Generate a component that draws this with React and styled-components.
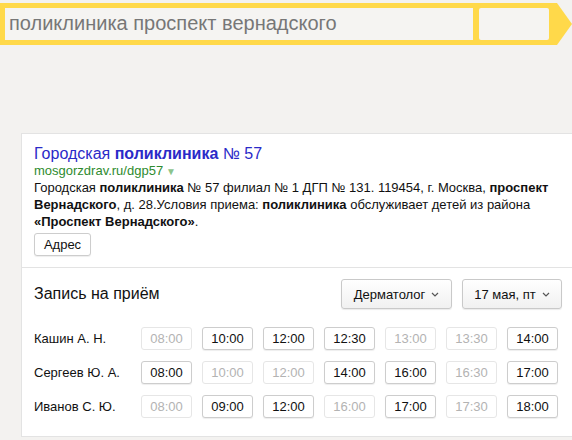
import styled, { createGlobalStyle } from 'styled-components'

const GlobalStyle = createGlobalStyle`
  html, body {
    margin: 0;
    padding: 0;
    background: #f3f2f0;
    overflow: hidden;
  }
  body {
    font-family: "Liberation Sans", Arial, sans-serif;
    color: #000;
  }
`

const Page = styled.div`
  width: 572px;
  height: 440px;
  overflow: hidden;
  padding-top: 3px;
  box-sizing: border-box;
`

const SearchBar = styled.div`
  display: flex;
  align-items: stretch;
  height: 42px;
`

const SearchFrame = styled.div`
  display: flex;
  flex: 1;
  gap: 6px;
  padding: 5px 8px 5px 5px;
  background: #ffd94a;
`

const SearchInput = styled.div`
  flex: 1;
  display: flex;
  align-items: center;
  padding: 0 0 2px 4px;
  background: #f5f4f2;
  color: #777;
  font-size: 20px;
`

const SearchButton = styled.div`
  width: 70px;
  background: #f5f4f2;
  border-radius: 2px;
`

const Arrow = styled.div`
  width: 15px;
  background: #ffd94a;
  clip-path: polygon(0 0, 100% 50%, 0 100%);
`

const Card = styled.div`
  margin: 88px 0 0 21px;
  width: 580px;
  background: #fff;
  border: 1px solid #e3e3e3;
  box-sizing: border-box;
`

const Snippet = styled.div`
  padding: 10px 12px 11px;
`

const Title = styled.a`
  display: block;
  font-size: 16px;
  line-height: 20px;
  color: #2a2ac8;
  text-decoration: none;
  b { font-weight: bold; }
`

const Url = styled.div`
  font-size: 13px;
  line-height: 14px;
  color: #2e8b2e;
  span {
    color: #8cc48c;
    font-size: 10px;
    margin-left: 3px;
  }
`

const Text = styled.p`
  margin: 0;
  font-size: 13px;
  line-height: 17px;
  color: #111;
  b { font-weight: bold; }
`

const Button = styled.button`
  font-family: inherit;
  font-size: 13px;
  color: ${p => (p.$off ? '#b3b3b3' : '#111')};
  background: #fff;
  border: 1px solid ${p => (p.$off ? '#e6e6e6' : '#cdcdcd')};
  border-radius: 3px;
  box-shadow: ${p => (p.$off ? 'none' : '0 1px 1px rgba(0,0,0,0.07)')};
  padding: 0;
  cursor: pointer;
`

const AddressButton = styled(Button)`
  margin-top: 3px;
  width: 57px;
  height: 23px;
`

const Schedule = styled.div`
  border-top: 1px solid #e3e3e3;
  padding: 11px 12px 18px;
`

const Header = styled.div`
  display: flex;
  align-items: center;
  width: 528px;
  height: 30px;
`

const HeaderTitle = styled.div`
  flex: 1;
  font-size: 16px;
  color: #111;
`

const Select = styled.button`
  display: flex;
  align-items: center;
  justify-content: center;
  gap: 6px;
  height: 30px;
  width: ${p => p.$w}px;
  margin-left: 10px;
  font-family: inherit;
  font-size: 13px;
  color: #111;
  background: linear-gradient(#fff, #f1f1f1);
  border: 1px solid #c9c9c9;
  border-radius: 3px;
  box-shadow: 0 1px 1px rgba(0,0,0,0.08);
  padding: 0;
`

const Rows = styled.div`
  display: flex;
  flex-direction: column;
  gap: 11px;
  margin-top: 18px;
`

const Row = styled.div`
  display: grid;
  grid-template-columns: 97px repeat(7, 51px);
  column-gap: 10px;
  align-items: center;
`

const Name = styled.div`
  font-size: 13px;
  color: #111;
`

const Slot = styled(Button)`
  height: 23px;
`

const Chevron = () => (
  <svg width="8" height="5" viewBox="0 0 8 5">
    <path d="M1 1l3 3 3-3" fill="none" stroke="#555" strokeWidth="1.2" />
  </svg>
)

const doctors = [
  {
    name: 'Кашин А. Н.',
    slots: [['08:00', 0], ['10:00', 1], ['12:00', 1], ['12:30', 1], ['13:00', 0], ['13:30', 0], ['14:00', 1]],
  },
  {
    name: 'Сергеев Ю. А.',
    slots: [['08:00', 1], ['10:00', 0], ['12:00', 0], ['14:00', 1], ['16:00', 1], ['16:30', 0], ['17:00', 1]],
  },
  {
    name: 'Иванов С. Ю.',
    slots: [['08:00', 0], ['09:00', 1], ['12:00', 1], ['16:00', 0], ['17:00', 1], ['17:30', 0], ['18:00', 1]],
  },
]

export default function App() {
  return (
    <Page>
      <GlobalStyle />
      <SearchBar>
        <SearchFrame>
          <SearchInput>поликлиника проспект вернадского</SearchInput>
          <SearchButton />
        </SearchFrame>
        <Arrow />
      </SearchBar>

      <Card>
        <Snippet>
          <Title href="#">Городская <b>поликлиника</b> № 57</Title>
          <Url>mosgorzdrav.ru/dgp57<span>▼</span></Url>
          <Text>
            Городская <b>поликлиника</b> № 57 филиал № 1 ДГП № 131. 119454, г. Москва, <b>проспект</b><br />
            <b>Вернадского</b>, д. 28.Условия приема: <b>поликлиника</b> обслуживает детей из района<br />
            <b>«Проспект Вернадского»</b>.
          </Text>
          <AddressButton>Адрес</AddressButton>
        </Snippet>

        <Schedule>
          <Header>
            <HeaderTitle>Запись на приём</HeaderTitle>
            <Select $w={111}>Дерматолог <Chevron /></Select>
            <Select $w={100}>17 мая, пт <Chevron /></Select>
          </Header>
          <Rows>
            {doctors.map(d => (
              <Row key={d.name}>
                <Name>{d.name}</Name>
                {d.slots.map(([t, ok]) => (
                  <Slot key={t} $off={!ok}>{t}</Slot>
                ))}
              </Row>
            ))}
          </Rows>
        </Schedule>
      </Card>
    </Page>
  )
}
